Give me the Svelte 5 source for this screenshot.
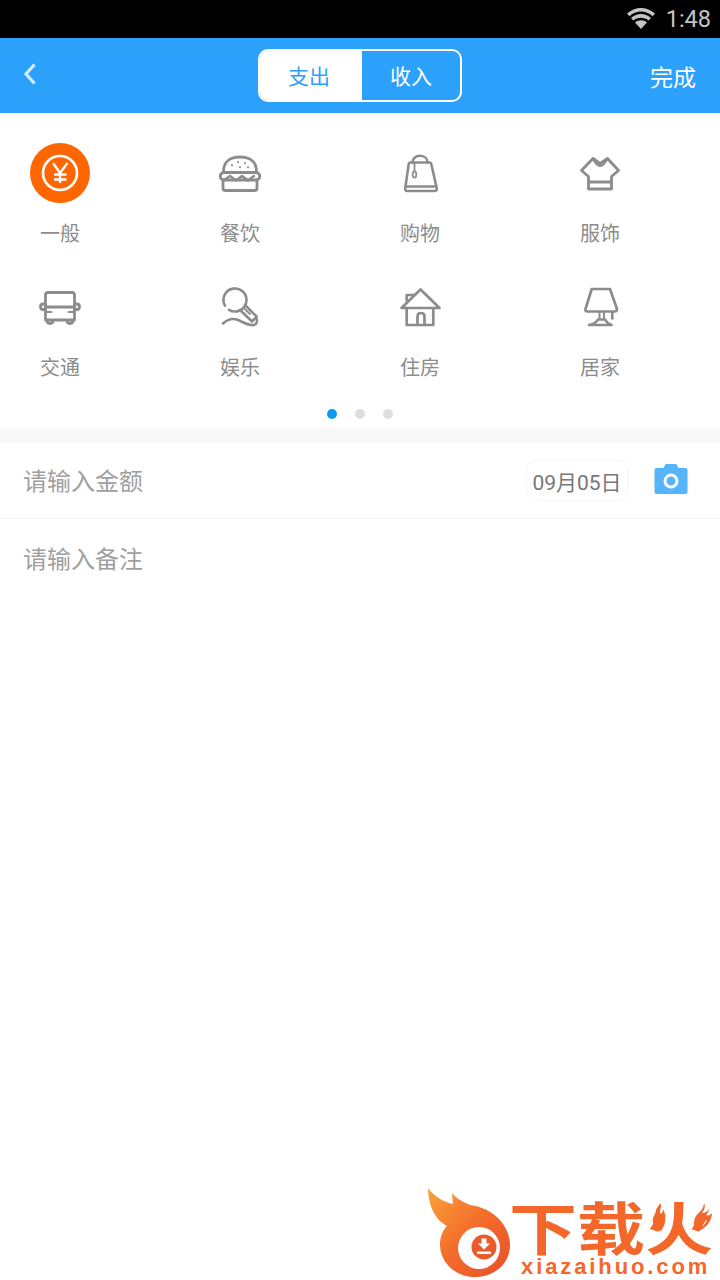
<script>
	const categories = [
		{ name: '一般', icon: 'yuan' },
		{ name: '餐饮', icon: 'burger' },
		{ name: '购物', icon: 'bag' },
		{ name: '服饰', icon: 'shirt' },
		{ name: '交通', icon: 'bus' },
		{ name: '娱乐', icon: 'mic' },
		{ name: '住房', icon: 'house' },
		{ name: '居家', icon: 'lamp' }
	];
</script>

<div class="page">
	<div class="status">
		<svg class="wifi" viewBox="0 0 30 22" width="30" height="22">
			<path d="M1 6.5 C9 -1 21 -1 29 6.5 L26.6 9.2 C19.5 3 10.5 3 3.4 9.2 Z" fill="#c4c4c4" />
			<path d="M5 11 C11 5.6 19 5.6 25 11 L22.7 13.6 C18 9.8 12 9.8 7.3 13.6 Z" fill="#c4c4c4" />
			<path d="M9 15.4 C12.6 12.4 17.4 12.4 21 15.4 L15 22 Z" fill="#c4c4c4" />
		</svg>
		<span class="time">1:48</span>
	</div>

	<header>
		<svg class="back" viewBox="0 0 16 24" width="16" height="24">
			<path d="M12.5 2.5 L4 12 L12.5 21.5" fill="none" stroke="#d5ecfe" stroke-width="3.2" />
		</svg>
		<div class="tabs">
			<div class="tab active">支出</div>
			<div class="tab">收入</div>
		</div>
		<div class="done">完成</div>
	</header>

	<section class="grid">
		{#each categories as c}
			<div class="cat">
				<svg class="icon" viewBox="0 0 60 60" width="60" height="60">
					{#if c.icon === 'yuan'}
						<circle cx="30" cy="30" r="30" fill="#ff6600" />
						<g fill="none" stroke="#fff">
							<circle cx="30" cy="30" r="17" stroke-width="2.6" />
							<path d="M23 20 L30 30 L37.5 20 M30 30 V40 M24 31.5 H36.5 M24 36.5 H36.5" stroke-width="2.4" />
						</g>
					{:else if c.icon === 'burger'}
						<g fill="none" stroke="#8c8c8c" stroke-width="2.8" stroke-linejoin="round" stroke-linecap="round">
							<path d="M13.5 28.5 C13.5 18 21 14 30 14 C39 14 46.5 18 46.5 28.5" />
							<path d="M14 29.5 H46 C51 29.5 51 37 46 37 H14 C9 37 9 29.5 14 29.5 Z" />
							<path d="M13 37 V45 Q13 47.5 15.5 47.5 H44.5 Q47 47.5 47 45 V37" />
							<path d="M14 37 L20 33 L26 37.5 L32 33 L38 37.5 L44 33" stroke-width="2.4" />
							<path d="M22 22 v.4 M28 19 v.4 M35 20 v.4 M38 24 v.4 M30 24 v.4" stroke-width="1.8" />
						</g>
					{:else if c.icon === 'bag'}
						<g fill="none" stroke="#8c8c8c" stroke-width="2.6" stroke-linejoin="round" stroke-linecap="round">
							<path d="M20 19.5 H40 Q41 19.500 41.300 21 L46.800 45.500 Q47 48 44.500 48 H17.500 Q15 48 15.200 45.500 L18.700 21 Q19 19.500 20 19.500 Z" />
							<path d="M22.500 19.500 C22.500 10.500 37.500 10.500 37.500 19.500" />
							<path d="M16 43.500 H46" />
							<path d="M24.500 20 V28" stroke-width="1.800" />
							<ellipse cx="24.500" cy="31.500" rx="1.800" ry="3.200" stroke-width="1.800" />
						</g>
					{:else if c.icon === 'shirt'}
						<g fill="none" stroke="#8c8c8c" stroke-width="2.8" stroke-linejoin="round" stroke-linecap="round">
							<path d="M23 15.5 L11.5 27.5 L18.5 33.5 V46 H41.5 V33.5 L48.5 27.5 L37.5 15.5 L30 20.5 Z" />
							<path d="M23 15.5 Q30 30 37.5 15.5" stroke-width="2.4" />
							<path d="M18.5 39 H41.5" />
						</g>
					{:else if c.icon === 'bus'}
						<g fill="none" stroke="#8c8c8c" stroke-width="2.8" stroke-linejoin="round" stroke-linecap="round">
							<path d="M15.5 43 V18 Q15.5 15.5 18 15.5 H42 Q44.5 15.5 44.5 18 V43 Z" />
							<path d="M15.5 30 H44.5" />
							<path d="M15.5 27 H13 Q10.5 27 10.5 30 Q10.5 32.5 13 32.5 H15.5 M44.5 27 H47 Q49.5 27 49.5 30 Q49.5 32.5 47 32.5 H44.5" />
							<path d="M16 35 H21.5 M38.5 35 H44" stroke-width="2" />
							<path d="M17 43.5 Q17 46.5 20 46.5 Q23 46.5 23 43.5 M37 43.5 Q37 46.5 40 46.5 Q43 46.5 43 43.5" />
						</g>
					{:else if c.icon === 'mic'}
						<g fill="none" stroke="#8c8c8c" stroke-width="2.6" stroke-linejoin="round" stroke-linecap="round">
							<path d="M15 28.7 A11.5 11.5 0 1 1 19 32.8" />
							<path d="M35 28 L46.7 39.7 L42 44.5 L30 33" />
							<path d="M35 32.3 L40 37" stroke-width="2" />
							<path d="M13 46.5 C18 42 23 41 28 43 C34 45.5 39 49 44 48 C47 47 47.5 44 46.5 41.5" />
						</g>
					{:else if c.icon === 'house'}
						<g fill="none" stroke="#8c8c8c" stroke-width="2.7" stroke-linejoin="round" stroke-linecap="round">
							<path d="M11.5 31 L30.5 12.5 L49.5 31 Z" />
							<path d="M16.7 31 V48 H43.3 V31" />
							<path d="M16.7 24 V18 H25" />
							<path d="M27.5 48 V39.5 Q27.5 36 31 36 Q34.5 36 34.5 39.5 V48" />
						</g>
					{:else}
						<g fill="none" stroke="#8c8c8c" stroke-width="2.7" stroke-linejoin="round" stroke-linecap="round">
							<path d="M21.7 12 H40 L47 32 Q47 34.5 44.5 34.5 H17.5 Q15 34.5 15.5 32 Z" />
							<path d="M42.3 35 V41.5" />
							<path d="M29.5 35 V42 M34 35 V42" stroke-width="2" />
							<path d="M19 48 Q26 46.5 28 42.5 H35 Q37 46.5 41.5 48 Z" />
						</g>
					{/if}
				</svg>
				<div class="cat-name">{c.name}</div>
			</div>
		{/each}
	</section>

	<div class="dots">
		<span class="dot on"></span>
		<span class="dot"></span>
		<span class="dot"></span>
	</div>

	<div class="band"></div>

	<div class="row amount">
		<span class="hint">请输入金额</span>
		<div class="row-right">
			<div class="date">09月05日</div>
			<svg class="camera" viewBox="0 0 34 30" width="34" height="30">
				<path d="M2.5 4 H9.5 L11 1 Q11.5 0 12.5 0 H21.5 Q22.5 0 23 1 L24.5 4 H31.5 Q33.5 4 33.5 6 V28 Q33.5 30 31.5 30 H2.5 Q0.5 30 0.5 28 V6 Q0.5 4 2.5 4 Z" fill="#55b4fc" />
				<circle cx="17" cy="17" r="6" fill="none" stroke="#fff" stroke-width="3" />
			</svg>
		</div>
	</div>
	<div class="row note">
		<span class="hint">请输入备注</span>
	</div>

	<div class="watermark">
		<svg class="flame" viewBox="0 0 100 100" width="100" height="100">
			<defs>
				<linearGradient id="flameFill" x1="0" y1="0" x2="1" y2="1">
					<stop offset="0" stop-color="#f9a338" />
					<stop offset="0.5" stop-color="#f46c2c" />
					<stop offset="1" stop-color="#e8502a" />
				</linearGradient>
			</defs>
			<path d="M8 8 C14 16 23 22 33 24 L32 13 C36 18 41 21 50 25 C74 28 90 46 90 65 C90 84 74 97 55 97 C35 97 20 82 20 65 C20 56 23 50 27 46 C15 40 8 25 8 8 Z" fill="url(#flameFill)" />
			<circle cx="59" cy="68" r="21" fill="#fff" />
			<circle cx="64" cy="67" r="12.5" fill="#ea5a2a" />
			<path d="M61.5 58.5 H66.5 V63.5 H70 L64 69.5 L58 63.5 H61.5 Z M57 71.5 H71 V74 H57 Z" fill="#fff" />
		</svg>
		<div class="brand">
			<div class="brand-cn">下载火</div>
			<svg class="sparks" viewBox="0 0 60 28" width="60" height="28">
				<path fill-rule="evenodd" d="M8 0 C11 4 6 8 9 11 C11 9 11 7 11 6 C14 12 15 20 9 28 C3 27 0 22 1 15 C2 12 4 10 4 7 C5 4 7 3 8 0 Z M7 13 C5 16 4 20 6 24 C9 24 11 19 10 15 C9 16 8 15 7 13 Z" fill="#f3682a" />
				<path fill-rule="evenodd" d="M52 0 C54 4 52 7 50 10 C53 10 56 8 57 6 C57 9 54 13 52 13 C56 13 59 12 60 10 C60 16 56 24 47 28 C41 26 41 18 44 13 C47 9 52 6 52 0 Z M48 16 C45 19 44 23 47 25 C51 24 54 20 55 17 C52 18 49 18 48 16 Z" fill="#f3682a" />
			</svg>
			<div class="brand-en">xiazaihuo.com</div>
		</div>
	</div>
</div>

<style>
	:global(body) {
		background: #fff;
	}

	.page {
		position: relative;
		width: 720px;
		height: 1280px;
		overflow: hidden;
		background: #fff;
		font-family: 'Noto Sans CJK SC', 'Noto Sans', sans-serif;
	}

	.status {
		height: 38px;
		background: #000;
		display: flex;
		align-items: center;
		justify-content: flex-end;
		padding-right: 9px;
		box-sizing: border-box;
	}

	.wifi {
		margin-right: 10px;
		margin-bottom: 2px;
	}

	.time {
		font-family: Roboto, sans-serif;
		font-size: 23.5px;
		color: #c4c4c4;
		line-height: 40px;
	}

	header {
		height: 75px;
		background: #2ba1fb;
		display: grid;
		grid-template-columns: 1fr 204px 1fr;
		align-items: center;
		padding-bottom: 2px;
		box-sizing: border-box;
	}

	.back {
		margin-left: 22px;
		margin-bottom: 2px;
	}

	.tabs {
		display: grid;
		grid-template-columns: 102px 1fr;
		height: 53px;
		box-sizing: border-box;
		border: 2px solid #fff;
		border-radius: 10px;
		overflow: hidden;
		margin-top: 1px;
	}

	.tab {
		display: flex;
		align-items: center;
		justify-content: center;
		font-size: 21px;
		color: #fff;
	}

	.tab.active {
		background: #fff;
		color: #2ba1fb;
		padding-right: 4px;
	}

	.done {
		justify-self: end;
		margin-right: 24px;
		font-size: 23px;
		color: #fff;
		margin-top: 3px;
	}

	.grid {
		display: grid;
		grid-template-columns: repeat(4, 120px);
		column-gap: 60px;
		grid-auto-rows: 134px;
		padding-top: 30px;
	}

	.cat {
		display: flex;
		flex-direction: column;
		align-items: center;
	}

	.icon {
		display: block;
	}

	.cat-name {
		font-size: 20px;
		line-height: 28px;
		color: #8c8c8c;
		margin-top: 16px;
	}

	.dots {
		display: flex;
		justify-content: center;
		gap: 18px;
		height: 10px;
		margin-top: -2px;
		margin-bottom: 9px;
	}

	.dot {
		width: 10px;
		height: 10px;
		border-radius: 50%;
		background: #dedede;
	}

	.dot.on {
		background: #0a9af0;
	}

	.band {
		height: 15px;
		background: #f8f8f8;
	}

	.row {
		display: flex;
		align-items: center;
		justify-content: space-between;
		padding: 0 32px 0 23px;
		box-sizing: border-box;
	}

	.amount {
		height: 76px;
		border-bottom: 1px solid #f4f4f4;
	}

	.note {
		height: 80px;
		padding-bottom: 2px;
	}

	.hint {
		font-size: 24px;
		color: #a0a0a0;
		margin-bottom: 2px;
	}

	.row-right {
		display: flex;
		align-items: center;
		gap: 26px;
	}

	.date {
		width: 102px;
		height: 41px;
		box-sizing: border-box;
		border: 1px solid #f5f5f5;
		border-radius: 9px;
		display: flex;
		align-items: center;
		justify-content: center;
		font-family: Roboto, 'Noto Sans CJK SC', sans-serif;
		font-size: 21px;
		color: #777;
		white-space: nowrap;
	}

	.camera {
		display: block;
		margin-bottom: 4px;
	}

	.watermark {
		position: absolute;
		left: 420px;
		top: 1180px;
		display: flex;
		width: 300px;
		height: 100px;
	}

	.flame {
		display: block;
		flex: none;
	}

	.brand {
		position: relative;
		flex: 1;
		margin-left: -9px;
	}

	.brand-cn {
		position: absolute;
		left: -2px;
		top: 20px;
		font-size: 68px;
		line-height: 60px;
		font-weight: 700;
		color: #f3682a;
		white-space: nowrap;
		transform: scaleY(0.84);
		transform-origin: top left;
	}

	.sparks {
		position: absolute;
		left: 141px;
		top: 23px;
	}

	.brand-en {
		position: absolute;
		left: 10px;
		top: 75px;
		font-family: 'Liberation Sans', sans-serif;
		font-size: 22px;
		font-weight: 700;
		line-height: 24px;
		letter-spacing: 2.9px;
		color: #f3682a;
		white-space: nowrap;
	}
</style>
